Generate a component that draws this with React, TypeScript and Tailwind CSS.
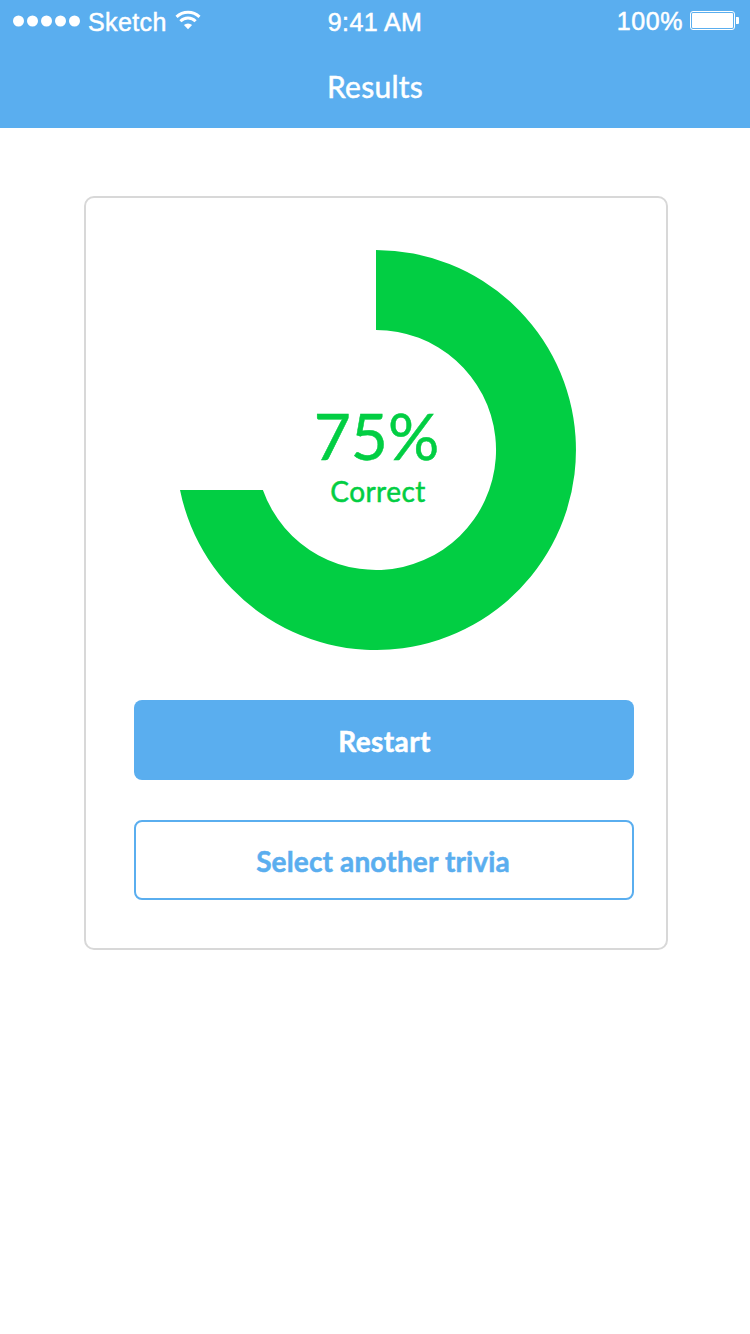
export default function App() {
  return (
    <div className="flex h-[1334px] w-[750px] flex-col bg-white font-['Lato',sans-serif]">
      <header className="flex h-32 flex-col bg-[#5aaeef] text-white">
        <div className="grid h-10 grid-cols-3 items-center font-['Liberation_Sans',sans-serif] text-[25px] leading-[44px] tracking-[0.4px] [-webkit-text-stroke:0.5px_currentColor]">
          <div className="flex items-center pl-[13px]">
            <svg className="-mt-[3px]" width="68" height="12" viewBox="0 0 68 12" fill="currentColor">
              <circle cx="5.5" cy="6" r="5.5" />
              <circle cx="19.5" cy="6" r="5.5" />
              <circle cx="33.5" cy="6" r="5.5" />
              <circle cx="47.5" cy="6" r="5.5" />
              <circle cx="61.5" cy="6" r="5.5" />
            </svg>
            <span className="ml-[7px] w-[79px]">Sketch</span>
            <svg className="-mt-1 ml-2" width="26" height="20" viewBox="0 0 26 20" fill="none" stroke="currentColor" strokeWidth="3">
              <path d="M1.5 6.8a16.5 16.5 0 0 1 23 0M5.4 11.2a10.7 10.7 0 0 1 15.2 0" />
              <path d="M13 19.2l-4.1-4.1a5.8 5.8 0 0 1 8.2 0z" fill="currentColor" stroke="none" />
            </svg>
          </div>
          <span className="text-center">9:41 AM</span>
          <div className="flex items-center justify-end pr-[11px]">
            <span className="pb-0.5 leading-[42px] tracking-[0.6px]">100%</span>
            <svg className="-mt-[3px] ml-[7px]" width="49" height="19" viewBox="0 0 49 19">
              <rect x="0.5" y="0.5" width="44" height="18" rx="2.5" fill="none" stroke="white" />
              <rect x="2" y="2" width="41" height="15" rx="1" fill="white" />
              <path d="M46 6h2a1 1 0 0 1 1 1v5a1 1 0 0 1-1 1h-2z" fill="white" />
            </svg>
          </div>
        </div>
        <h1 className="pt-[28px] text-center text-[30px] leading-9 tracking-[0.25px] [-webkit-text-stroke:0.5px_currentColor]">Results</h1>
      </header>
      <main className="mt-[68px] ml-[84px] flex h-[754px] w-[584px] flex-col rounded-[10px] border-2 border-[#d8d8d8] pt-[52px] pl-12">
        <div className="ml-[42px] grid size-[400px] place-items-center">
          <svg className="col-start-1 row-start-1" width="400" height="400" viewBox="0 0 400 400">
            <path d="M200 0A200 200 0 1 1 4 240H86.9A120 120 0 1 0 200 80Z" fill="#02ce43" />
          </svg>
          <div className="col-start-1 row-start-1 flex flex-col items-center pt-1 pl-px text-[#02ce43] [-webkit-text-stroke:0.5px_currentColor]">
            <span className="text-[64px] leading-[77px]">75%</span>
            <span className="pl-[3px] text-[28px] leading-[34px] tracking-[0.45px]">Correct</span>
          </div>
        </div>
        <button className="mt-[50px] h-20 w-[500px] rounded-lg bg-[#5aaeef] pt-0.5 pl-px text-[28px] font-bold tracking-[0.4px] text-white [-webkit-text-stroke:0.5px_currentColor]">Restart</button>
        <button className="mt-10 h-20 w-[500px] rounded-lg border-2 border-[#5aaeef] pt-0.5 pr-0.5 text-[28px] font-bold tracking-[0.15px] text-[#5aaeef] [-webkit-text-stroke:0.5px_currentColor]">Select another trivia</button>
      </main>
    </div>
  );
}
